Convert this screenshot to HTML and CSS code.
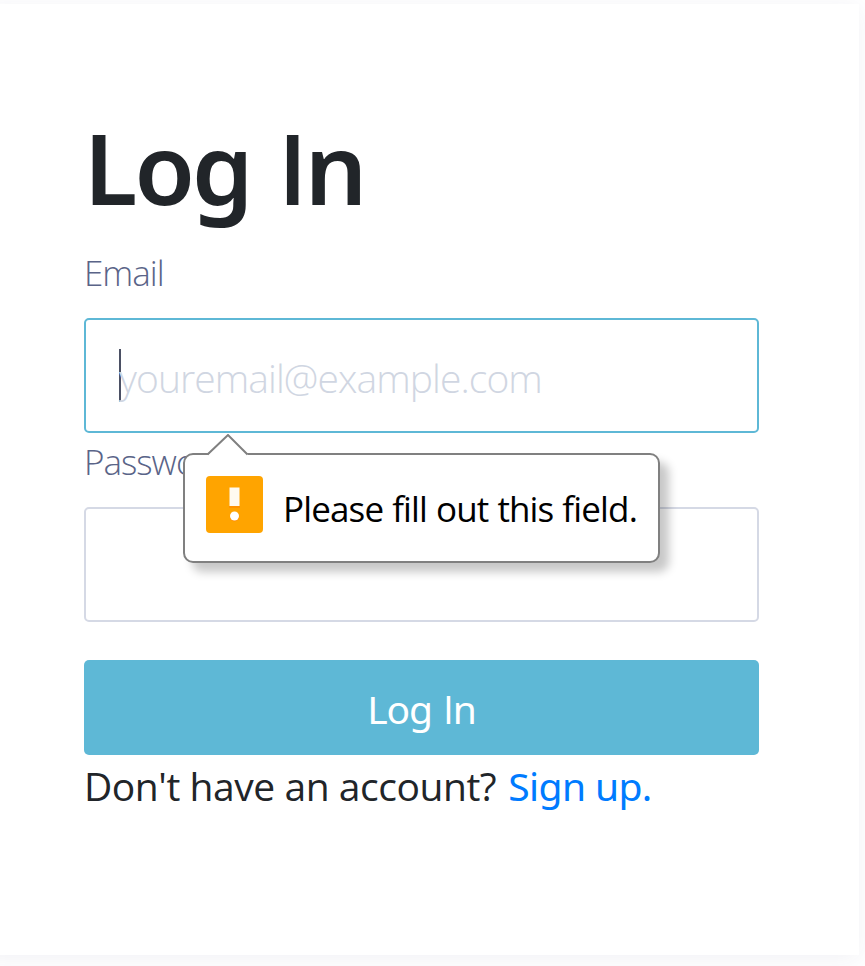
FILE: index.html
```html
<!DOCTYPE html>
<html lang="en">
<head>
<meta charset="utf-8">
<title>Log In</title>
<link rel="stylesheet" href="styles.css">
</head>
<body>
<main class="card">
  <h1 class="title">Log <span class="plain">I</span>n</h1>
  <form class="form">
    <div class="label">Email</div>
    <div class="field field-focus"><span class="caret"></span><span class="placeholder">youremail@example.com</span>
      <div class="tooltip" role="alert">
        <svg class="arrow" width="44" height="22" viewBox="0 0 44 22"><path d="M0 22L2 21L22 1L42 21L44 22Z" fill="#fff"/><path d="M1.500 20.500L22 1L41.500 20.500" fill="none" stroke="#808080" stroke-width="2"/></svg>
        <svg class="warn" width="57" height="57" viewBox="0 0 57 57"><rect width="57" height="57" rx="4" fill="#ffa400"/><path d="M23 31H34" stroke="#ff8c00" stroke-width="1.500"/><rect x="23.500" y="11.500" width="10" height="18.500" fill="#fffaf0"/><circle cx="28.500" cy="40.700" r="4.700" fill="#ff8c00"/><circle cx="28.500" cy="40" r="4.500" fill="#fff"/></svg>
        <span class="message">Please fill out this field.</span>
      </div>
    </div>
    <div class="label">Password</div>
    <div class="field"></div>
    <button class="submit" type="button">Log <span class="plain">I</span>n</button>
  </form>
  <p class="footer"><span class="question">Don't have an account?</span> <a class="link" href="#">Sign up.</a></p>
</main>
</body>
</html>
```
FILE: styles.css
```css
* { box-sizing: border-box; }
body {
  margin: 0;
  height: 966px;
  overflow: hidden;
  background: #fff;
  font-family: "Open Sans", "Noto Sans", sans-serif;
  color: #212529;
}
.card {
  width: 875px;
  height: 951px;
  margin: 4px 0 0 -16px;
  padding: 103px 100px 0;
  background: #fff;
  box-shadow: 0 4px 24px rgba(40, 40, 110, .065);
}
.title {
  margin: 0;
  height: 140px;
  font-family: "Noto Sans", sans-serif;
  font-size: 98px;
  line-height: 120px;
  font-weight: 600;
  letter-spacing: -3px;
  word-spacing: 5px;
}
/* Unserifed capital I */
.plain { font-family: "Open Sans", sans-serif; }
.label {
  height: 72px;
  font-size: 35px;
  line-height: 52px;
  font-weight: 300;
  letter-spacing: -1px;
  color: #5a6488;
}
.field {
  position: relative;
  display: flex;
  align-items: center;
  height: 115px;
  margin: -1px 0 3px;
  padding: 0 33px;
  border: 2px solid #d5d9e5;
  border-radius: 5px;
}
.field-focus { border-color: #5eb8d6; }
.caret {
  flex: none;
  width: 2px;
  height: 53px;
  margin-right: -2px;
  background: #4b5064;
}
.placeholder {
  font-size: 39px;
  font-weight: 300;
  line-height: 53px;
  letter-spacing: -.92px;
  margin-top: 3px;
  color: #d0d6e2;
}
.tooltip {
  position: absolute;
  z-index: 1;
  left: 97px;
  top: 133px;
  width: 477px;
  height: 110px;
  display: flex;
  align-items: flex-start;
  padding: 21px;
  background: #fff;
  border: 2px solid #808080;
  border-radius: 10px;
  box-shadow: 9px 9px 10px rgba(0, 0, 0, .22);
}
.arrow { position: absolute; left: 21px; top: -21px; }
.warn { flex: none; }
.message {
  margin-left: 20px;
  font-size: 35px;
  line-height: 65px;
  letter-spacing: -.85px;
  word-spacing: .7px;
  color: #000;
  white-space: nowrap;
}
.submit {
  display: block;
  width: 100%;
  height: 95px;
  margin-top: 38px;
  padding: 1px 0 0;
  border: 0;
  border-radius: 5px;
  background: #5eb8d6;
  color: #fff;
  font: 400 39px/53px "Noto Sans", sans-serif;
  letter-spacing: -1.1px;
  word-spacing: 2px;
}
.footer {
  display: flex;
  gap: 12px;
  margin: 1px 0 0;
  font-size: 39px;
  line-height: 60px;
  white-space: nowrap;
}
.question { letter-spacing: -.45px; }
.link { font-family: "Noto Sans", sans-serif; letter-spacing: -.6px; color: #007bff; text-decoration: none; }
```
